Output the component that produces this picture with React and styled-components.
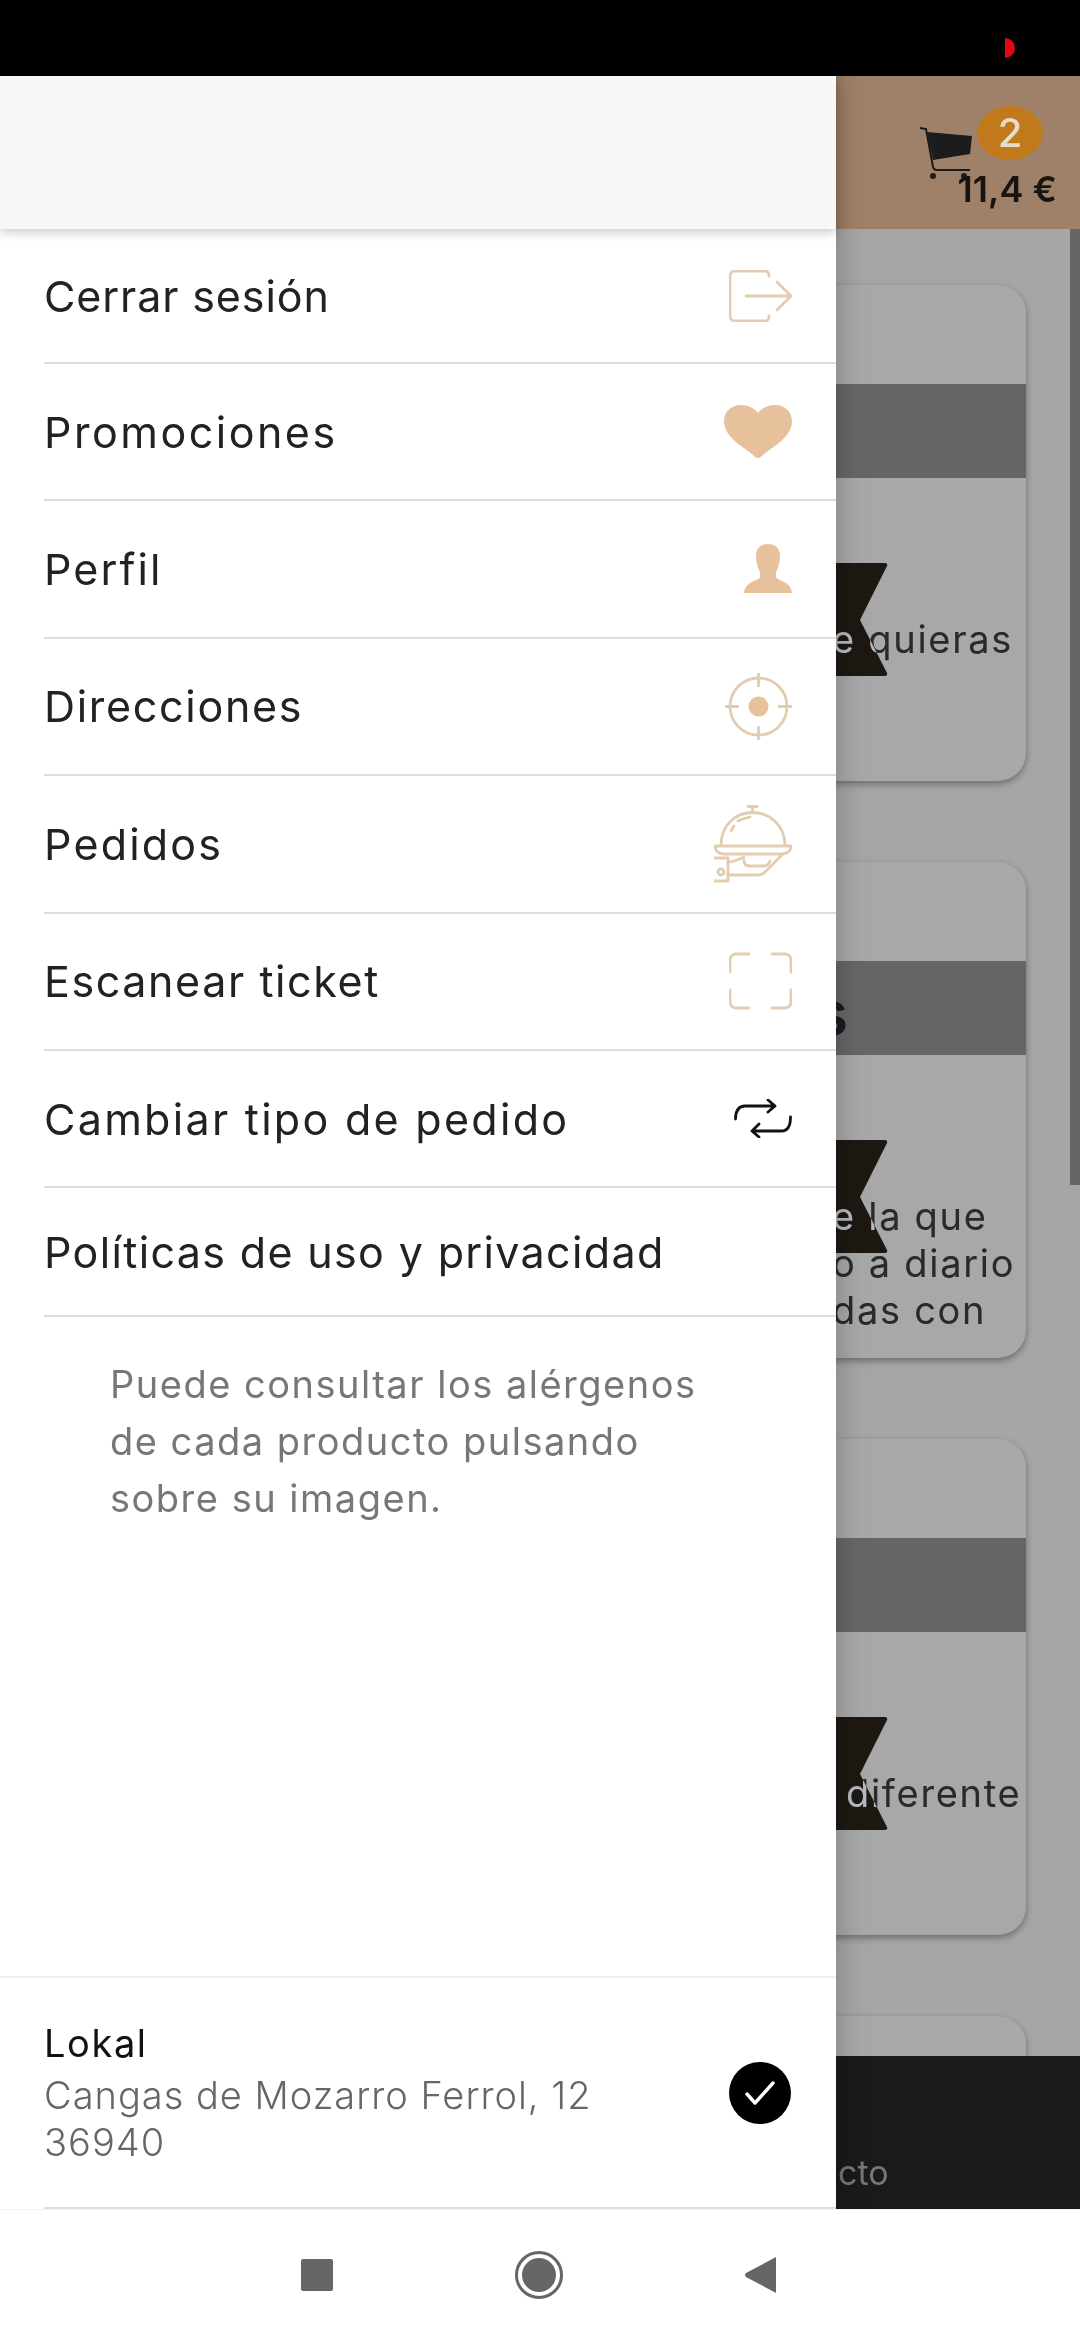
import React from "react";
import styled, { createGlobalStyle } from "styled-components";

const accent = "#e6c19c";
const line = "#e3ccb0";

const GlobalStyle = createGlobalStyle`
  html, body {
    margin: 0;
    padding: 0;
    background: #fff;
  }
  * {
    box-sizing: border-box;
  }
  body {
    font-family: Inter, "Open Sans", "Liberation Sans", sans-serif;
  }
`;

const Phone = styled.div`
  width: 1080px;
  height: 2340px;
  display: flex;
  flex-direction: column;
  overflow: hidden;
`;

const StatusBar = styled.div`
  height: 76px;
  flex: none;
  background: #000;
  display: flex;
  justify-content: flex-end;
  align-items: center;
  padding: 20px 65px 0 0;
`;

const RecDot = styled.div`
  width: 10px;
  height: 20px;
  background: #e30613;
  border-radius: 0 10px 10px 0;
`;

const Main = styled.div`
  flex: 1;
  position: relative;
  overflow: hidden;
`;

const Scene = styled.div`
  height: 100%;
  display: flex;
  flex-direction: column;
  background: #a6a6a6;
`;

const TopBar = styled.div`
  height: 153px;
  flex: none;
  background: #9e8168;
  display: flex;
  justify-content: flex-end;
  padding: 51px 108px 0 0;
`;

const CartBox = styled.div`
  position: relative;
  width: 52px;
  height: 52px;
`;

const CartBadge = styled.div`
  position: absolute;
  left: 57px;
  top: -21px;
  width: 66px;
  height: 54px;
  border-radius: 50%;
  background: #c07a1c;
  color: #e6dccb;
  font-size: 40px;
  font-weight: 500;
  line-height: 54px;
  text-align: center;
`;

const CartPrice = styled.div`
  position: absolute;
  right: -85px;
  top: 40px;
  white-space: nowrap;
  color: #1a1410;
  font-size: 36px;
  font-weight: 600;
  line-height: 44px;
`;

const Scroller = styled.div`
  flex: 1;
  min-height: 0;
  overflow: hidden;
  position: relative;
  display: flex;
  flex-direction: column;
  gap: 81px;
  padding: 56px 54px 0;
`;

const ScrollThumb = styled.div`
  position: absolute;
  right: 0;
  top: 0;
  width: 10px;
  height: 956px;
  background: #666;
`;

const Card = styled.div`
  flex: none;
  height: 496px;
  border-radius: 28px;
  background: #a8a8a8;
  box-shadow: 0 3px 7px rgba(0, 0, 0, 0.35);
  display: flex;
  flex-direction: column;
  padding-top: 99px;
  overflow: hidden;
`;

const Band = styled.div`
  height: 94px;
  flex: none;
  background: #666;
  display: flex;
  align-items: center;
  padding: 8px 0 0 760px;
  color: #181c22;
  font-size: 62px;
  font-weight: 600;
`;

const CardBody = styled.div`
  flex: 1;
  position: relative;
  display: flex;
  justify-content: center;
  padding-top: 85px;
`;

const CardText = styled.div`
  position: absolute;
  left: ${(p) => p.$left}px;
  top: 138px;
  color: #d2d2d2;
  mix-blend-mode: difference;
  font-size: 38px;
  letter-spacing: 1.7px;
  line-height: 47px;
  white-space: nowrap;
`;

const BottomBar = styled.div`
  height: 153px;
  flex: none;
  background: #1a1a1a;
  color: #777;
  font-size: 34px;
  padding: 94px 0 0 838px;
  line-height: 46px;
`;

const Drawer = styled.div`
  position: absolute;
  left: 0;
  top: 0;
  bottom: 0;
  width: 836px;
  background: #fff;
  box-shadow: 0 0 30px rgba(0, 0, 0, 0.25);
  display: flex;
  flex-direction: column;
`;

const DrawerHead = styled.div`
  height: 153px;
  flex: none;
  background: #f8f8f8;
  box-shadow: 0 3px 10px rgba(0, 0, 0, 0.22);
  position: relative;
`;

const Row = styled.div`
  height: ${(p) => p.$h || 137.4}px;
  flex: none;
  margin-left: 44px;
  padding-right: 44px;
  border-bottom: 2px solid #ddd;
  display: flex;
  align-items: center;
  justify-content: space-between;
  color: #222;
  font-size: 43px;
  letter-spacing: ${(p) => p.$spacing}px;
`;

const Note = styled.div`
  flex: 1;
  padding: 39px 60px 0 110px;
  color: #777;
  font-size: 38px;
  letter-spacing: 1.5px;
  line-height: 57px;
`;

const Store = styled.div`
  flex: none;
  height: 233px;
  border-top: 2px solid #eee;
  padding-left: 44px;
`;

const StoreInner = styled.div`
  height: 100%;
  border-bottom: 2px solid #ddd;
  padding-right: 45px;
  display: flex;
  align-items: center;
  justify-content: space-between;
`;

const StoreName = styled.div`
  color: #111;
  font-size: 38px;
  letter-spacing: 1.6px;
  line-height: 46px;
  margin-bottom: 6px;
`;

const StoreAddress = styled.div`
  color: #666;
  font-size: 38px;
  font-weight: 300;
  letter-spacing: 1px;
  line-height: 47px;
`;

const Check = styled.div`
  width: 62px;
  height: 62px;
  border-radius: 50%;
  background: #000;
  display: flex;
  align-items: center;
  justify-content: center;
`;

const NavBar = styled.div`
  height: 131px;
  flex: none;
  background: #fff;
  border-top: 1px solid #f3f3f3;
  display: flex;
  align-items: center;
  justify-content: center;
  gap: 182px;
  padding: 0 4px 0 0;
`;

const LogoutIcon = () => (
  <svg width="63" height="52" viewBox="0 0 63 52" fill="none" stroke={line} strokeWidth="2.8" strokeLinecap="round">
    <path d="M40 6V5a4 4 0 0 0-4-4H6a5 5 0 0 0-5 5v40a5 5 0 0 0 5 5h30a4 4 0 0 0 4-4v-1" />
    <path d="M17 26h45M48 12l14 14-14 14" />
  </svg>
);

const HeartIcon = () => (
  <svg width="68" height="53" viewBox="0 0 68 53" fill={accent}>
    <path d="M34 53c-2 0-4-2-6-4C18 41 0 32 0 16 0 6 8 0 17 0c8 0 14 4 17 8 3-4 9-8 17-8 9 0 17 6 17 16 0 16-18 25-28 33-2 2-4 4-6 4z" />
  </svg>
);

const PersonIcon = () => (
  <svg width="48" height="50" viewBox="0 0 48 50" fill={accent}>
    <path d="M24 0c7 0 12 4 12 12 0 8-3 14-4 16v5c1 4 15 4 16 16H0c1-12 15-12 16-16v-5c-1-2-4-8-4-16C12 4 17 0 24 0z" />
  </svg>
);

const TargetIcon = () => (
  <svg width="67" height="67" viewBox="0 0 67 67" fill="none" stroke={line} strokeWidth="2.8">
    <circle cx="33.5" cy="33.5" r="28.5" />
    <circle cx="33.5" cy="33.5" r="10" fill={accent} stroke="none" />
    <path d="M33.5 0v14M33.5 53v14M0 33.5h14M53 33.5h14" />
  </svg>
);

const ClocheIcon = () => (
  <svg width="78" height="78" viewBox="0 0 78 78" fill="none" stroke={line} strokeWidth="2.8" strokeLinejoin="round" strokeLinecap="round">
    <path d="M34 1.5h9M38.5 1.5v6" />
    <path d="M7 40C7 20 22 7.5 38.5 7.5S71 20 71 40" />
    <path d="M17 26c1-2 2-4 3-5M24 16c4-2 8-3 12-4" />
    <path d="M1 41h76c0 5-4 8-9 8H10c-5 0-9-3-9-8z" />
    <path d="M0 53h14v23H0" />
    <circle cx="7" cy="67" r="3" />
    <path d="M14 57c6 0 12-3 16-5" />
    <path d="M30 55c0 5 2 6 6 6h14c3 0 5-2 6-5" />
    <path d="M14 70h31c2 0 3-1 5-2l18-18" />
  </svg>
);

const ScanIcon = () => (
  <svg width="63" height="58" viewBox="0 0 63 58" fill="none" stroke={line} strokeWidth="2.8" strokeLinecap="round">
    <path d="M1 20V8a6 6 0 0 1 6-6h13M43 2h13a6 6 0 0 1 6 6v12M1 38v12a6 6 0 0 0 6 6h13M43 56h13a6 6 0 0 0 6-6V38" />
  </svg>
);

const SwapIcon = () => (
  <svg width="58" height="39" viewBox="0 0 58 39" fill="none" stroke="#111" strokeWidth="2.8" strokeLinecap="round" strokeLinejoin="round">
    <path d="M1.5 20C1.5 11 5 7 11 7h30M34 1l7 6-7 6" />
    <path d="M56.5 18c0 9-3 14-9 14H18M25 25l-7 7 7 6" />
  </svg>
);

const CartIcon = () => (
  <svg width="52" height="52" viewBox="0 0 52 52">
    <path d="M0 1l6 1 7 38c.5 2 2 3 4 3h33" fill="none" stroke="#1a1a1a" strokeWidth="2" />
    <path d="M7 5l45 4-2 18-37 6z" fill="#1c1c1c" />
    <circle cx="13" cy="49" r="3" fill="#1c1c1c" />
    <circle cx="44" cy="49" r="3" fill="#1c1c1c" />
  </svg>
);

const CardLogo = () => (
  <svg width="696" height="113" viewBox="0 0 696 113">
    <path d="M0 3q0-3 3-3h690q3 0 2 3l-27 54 27 53q1 3-2 3H3q-3 0-3-3l27-53L0 3z" fill="#1e1812" />
  </svg>
);

const menu = [
  { label: "Cerrar sesión", icon: <LogoutIcon />, h: 135, spacing: 0.9 },
  { label: "Promociones", icon: <HeartIcon />, spacing: 2.5 },
  { label: "Perfil", icon: <PersonIcon />, spacing: 2.1 },
  { label: "Direcciones", icon: <TargetIcon />, spacing: 1.7 },
  { label: "Pedidos", icon: <ClocheIcon />, spacing: 2.2 },
  { label: "Escanear ticket", icon: <ScanIcon />, spacing: 1.6 },
  { label: "Cambiar tipo de pedido", icon: <SwapIcon />, spacing: 2.3 },
  { label: "Políticas de uso y privacidad", h: 129, spacing: 1.35 },
];

const cards = [
  { text: ["e quieras"], left: 778 },
  { title: "s", text: ["e la que", "o a diario", "das con"], left: 778 },
  { text: ["diferente"], left: 792 },
  { text: [], left: 778 },
];

const App = () => {
  return (
    <Phone>
      <GlobalStyle />
      <StatusBar>
        <RecDot />
      </StatusBar>
      <Main>
        <Scene>
          <TopBar>
            <CartBox>
              <CartIcon />
              <CartBadge>2</CartBadge>
              <CartPrice>11,4 €</CartPrice>
            </CartBox>
          </TopBar>
          <Scroller>
            {cards.map((card, i) => (
              <Card key={i}>
                <Band>{card.title}</Band>
                <CardBody>
                  <CardLogo />
                  <CardText $left={card.left}>
                    {card.text.map((t) => (
                      <div key={t}>{t}</div>
                    ))}
                  </CardText>
                </CardBody>
              </Card>
            ))}
            <ScrollThumb />
          </Scroller>
          <BottomBar>cto</BottomBar>
        </Scene>
        <Drawer>
          <DrawerHead />
          {menu.map((item) => (
            <Row key={item.label} $h={item.h} $spacing={item.spacing}>
              <span>{item.label}</span>
              {item.icon}
            </Row>
          ))}
          <Note>
            Puede consultar los alérgenos
            <br />
            de cada producto pulsando
            <br />
            sobre su imagen.
          </Note>
          <Store>
            <StoreInner>
              <div>
                <StoreName>Lokal</StoreName>
                <StoreAddress>
                  Cangas de Mozarro Ferrol, 12
                  <br />
                  36940
                </StoreAddress>
              </div>
              <Check>
                <svg width="32" height="26" viewBox="0 0 32 26" fill="none" stroke="#fff" strokeWidth="3.4" strokeLinecap="round" strokeLinejoin="round">
                  <path d="M3 14l8 9L29 3" />
                </svg>
              </Check>
            </StoreInner>
          </Store>
        </Drawer>
      </Main>
      <NavBar>
        <svg width="32" height="32" viewBox="0 0 32 32">
          <rect width="32" height="32" rx="2" fill="#666" />
        </svg>
        <svg width="48" height="48" viewBox="0 0 48 48">
          <circle cx="24" cy="24" r="22.5" fill="none" stroke="#666" strokeWidth="3" />
          <circle cx="24" cy="24" r="17" fill="#666" />
        </svg>
        <svg width="31" height="36" viewBox="0 0 31 36">
          <path d="M31 0v36L1 20q-2-2 0-4z" fill="#666" />
        </svg>
      </NavBar>
    </Phone>
  );
};

export default App;
